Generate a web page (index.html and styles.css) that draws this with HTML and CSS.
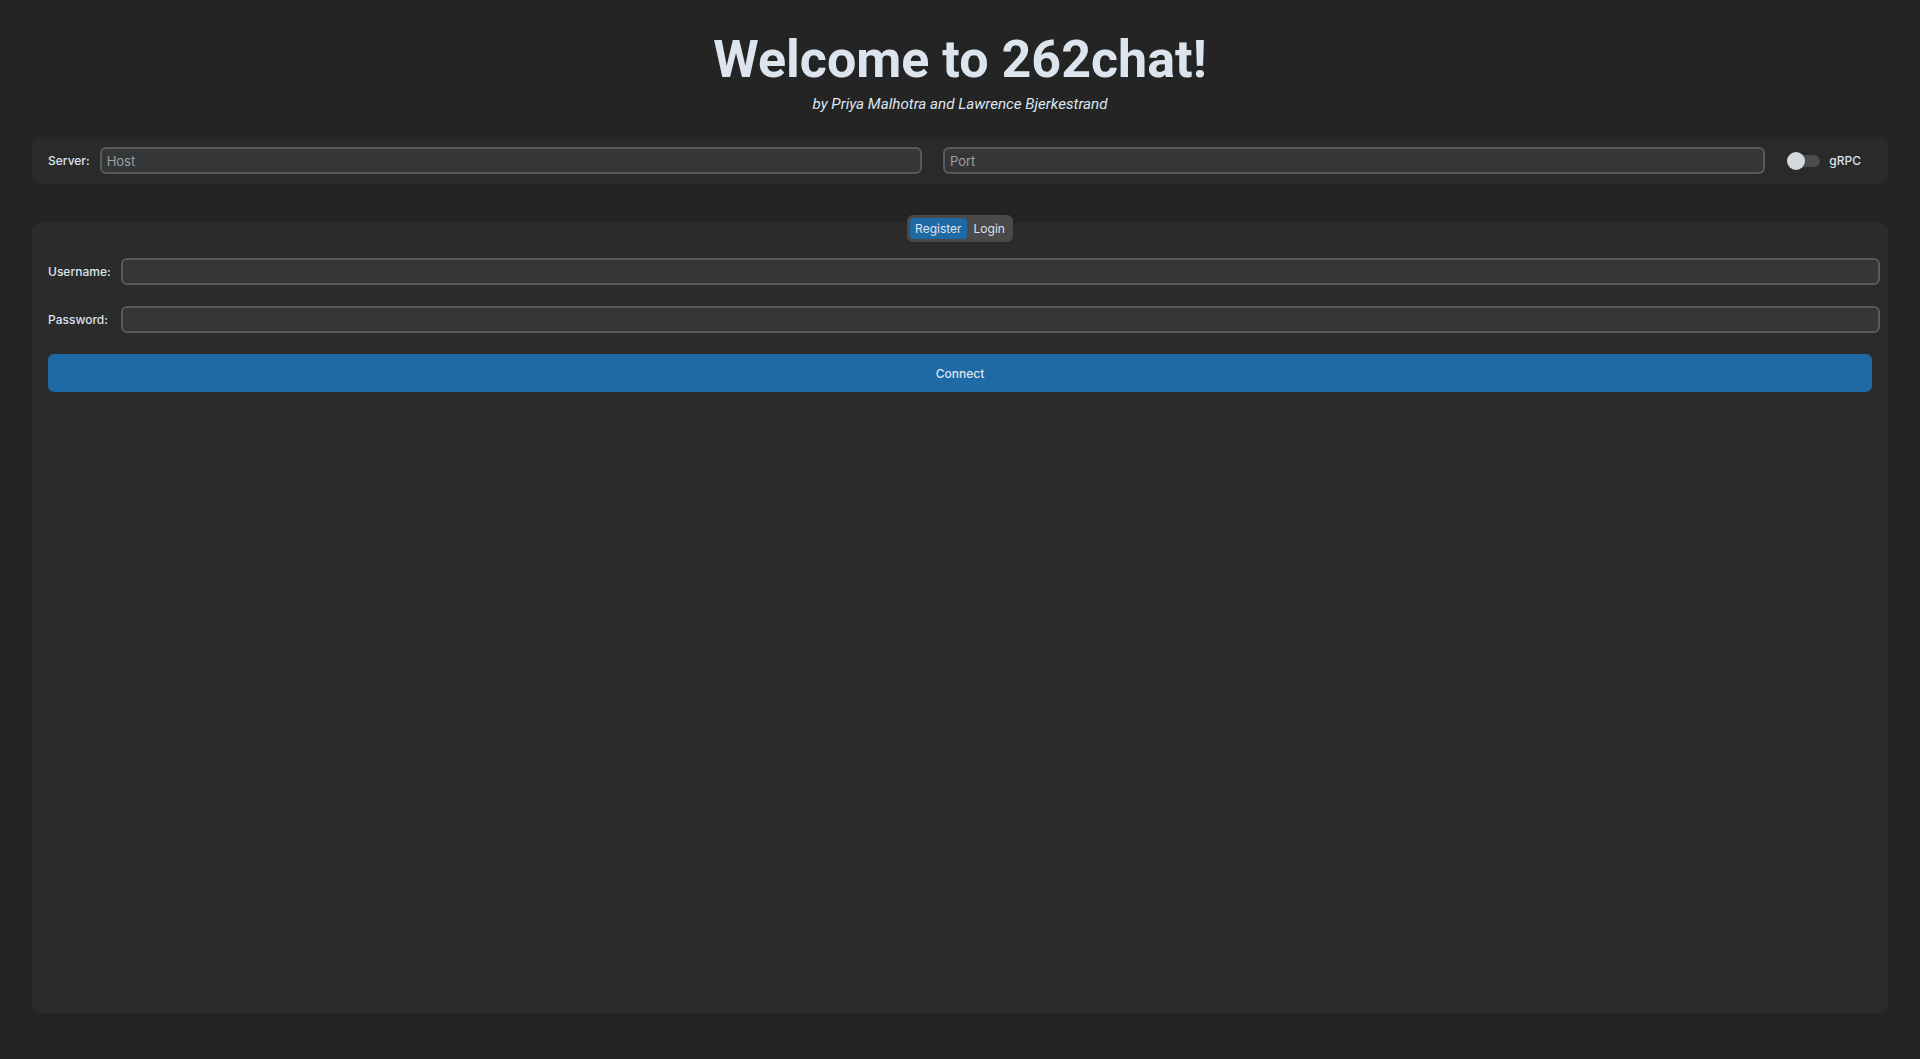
FILE: index.html
```html
<!DOCTYPE html>
<html>
<head>
<meta charset="utf-8">
<link rel="stylesheet" href="styles.css">
</head>
<body>
<div class="page">
  <header class="header">
    <h1 class="title">Welcome to 262chat!</h1>
    <p class="subtitle">by Priya Malhotra and Lawrence Bjerkestrand</p>
  </header>
  <section class="server-bar">
    <span class="label">Server:</span>
    <input class="field server-field" type="text" placeholder="Host">
    <input class="field server-field port" type="text" placeholder="Port">
    <div class="switch">
      <span class="switch-track"><span class="switch-knob"></span></span>
      <span class="switch-label">gRPC</span>
    </div>
  </section>
  <section class="panel">
    <div class="tabs">
      <span class="tab tab-active">Register</span>
      <span class="tab">Login</span>
    </div>
    <div class="form">
      <label class="label">Username:</label>
      <input class="field" type="text">
      <label class="label">Password:</label>
      <input class="field" type="password">
    </div>
    <button class="connect">Connect</button>
  </section>
</div>
</body>
</html>
```
FILE: styles.css
```css
* { box-sizing: border-box; }
html, body { margin: 0; height: 100%; }
body {
  background: #242424;
  font-family: Inter, "Noto Sans", sans-serif;
  color: #dce4ee;
}
.page {
  height: 1059px;
  display: flex;
  flex-direction: column;
  padding: 0 32px 46px;
}
.header { text-align: center; padding-top: 30px; }
.title {
  margin: 0;
  font-family: Roboto, sans-serif;
  font-weight: 700;
  font-size: 52px;
  line-height: 60px;
  color: #dce4ee;
}
.subtitle {
  margin: 5px 0 0;
  font-family: Roboto, sans-serif;
  font-style: italic;
  font-size: 15.2px;
  line-height: 18px;
  color: #dce4ee;
}
.server-bar {
  margin-top: 24px;
  height: 47px;
  background: #2a2a2a;
  border-radius: 6px;
  display: flex;
  align-items: center;
  padding: 0 27px 0 16px;
}
.label {
  font-size: 12px;
  font-weight: 500;
  color: #dce4ee;
  white-space: nowrap;
}
.field {
  height: 27px;
  background: #343638;
  border: 2px solid #565b5e;
  border-radius: 6px;
  color: #dce4ee;
  font-family: Inter, sans-serif;
  font-size: 13px;
  padding: 0 5px;
  outline: none;
}
.field::placeholder { color: #9ea0a3; }
.server-bar .label { margin-right: 10px; }
.server-field { flex: 1; min-width: 0; }
.port { margin-left: 21px; }
.switch {
  display: flex;
  align-items: center;
  margin-left: 22px;
}
.switch-track {
  position: relative;
  display: block;
  width: 33px;
  height: 12px;
  border-radius: 6px;
  background: #4a4d50;
}
.switch-knob {
  position: absolute;
  left: 0;
  top: -3px;
  width: 18px;
  height: 18px;
  border-radius: 50%;
  background: #d5d9de;
}
.switch-label {
  margin-left: 9px;
  font-size: 12px;
  font-weight: 500;
  color: #dce4ee;
}
.panel {
  margin-top: 39px;
  flex: 1;
  background: #2b2b2b;
  border-radius: 8px;
  padding: 0 8px 0 16px;
  display: flex;
  flex-direction: column;
}
.tabs {
  align-self: center;
  margin-top: -8px;
  margin-right: 8px;
  display: flex;
  gap: 2px;
  padding: 3px;
  background: #4a4a4a;
  border-radius: 6px;
}
.tab {
  height: 21px;
  line-height: 21px;
  padding: 0 5px;
  font-size: 12px;
  color: #dce4ee;
  border-radius: 4px;
}
.tab-active { background: #1f6aa5; }
.form {
  margin-top: 16px;
  display: grid;
  grid-template-columns: auto 1fr;
  column-gap: 10px;
  row-gap: 21px;
  align-items: center;
}
.connect {
  margin: 21px 8px 0 0;
  height: 38px;
  background: #1f6aa5;
  border: none;
  border-radius: 6px;
  color: #dce4ee;
  font-family: Inter, sans-serif;
  font-size: 12px;
  font-weight: 500;
}
```
